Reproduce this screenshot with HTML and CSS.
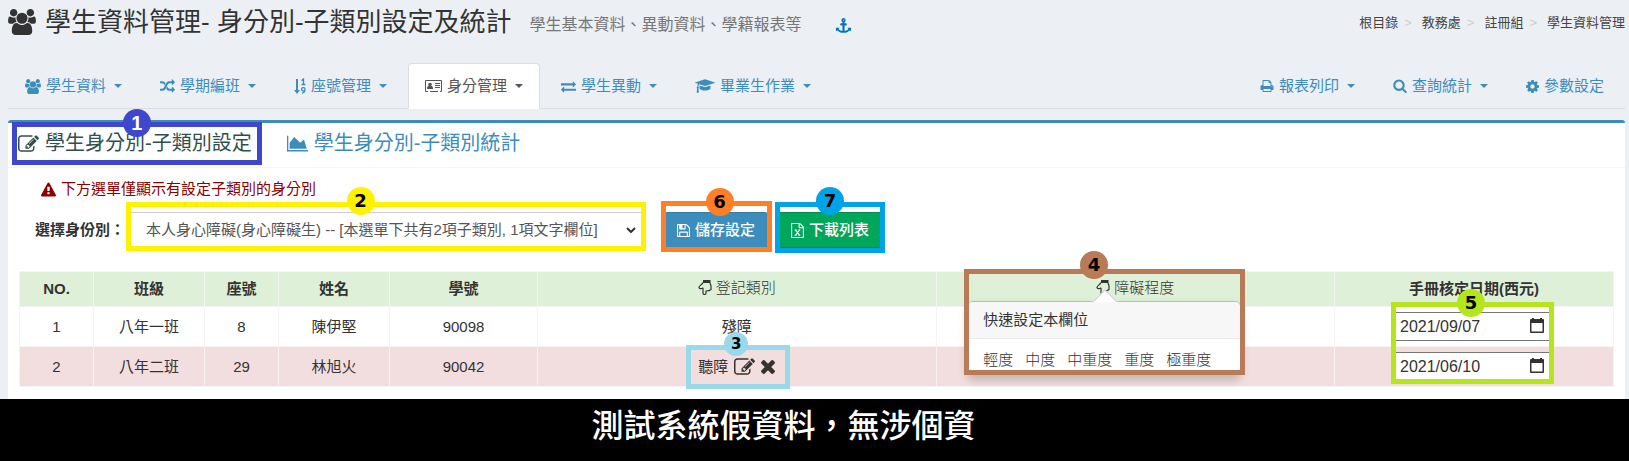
FILE: index.html
```html
<!DOCTYPE html>
<html lang="zh-Hant">
<head>
<meta charset="utf-8">
<meta name="viewport" content="width=device-width, initial-scale=1">
<title>學生資料管理</title>
<link rel="stylesheet" href="styles.css">
</head>
<body>
<svg class="sprite" aria-hidden="true">
  <symbol id="users" viewBox="0 0 1920 1792"><path d="M593 896q-162 5-265 128h-134q-82 0-138-40.5t-56-118.5q0-353 124-353 6 0 43.5 21t97.5 42.5 119 21.5q67 0 133-23-5 37-5 66 0 139 81 256zm1071 637q0 120-73 189.5t-194 69.5h-874q-121 0-194-69.5t-73-189.5q0-53 3.5-103.5t14-109 26.5-108.5 43-97.5 62-81 85.5-53.5 111.5-20q10 0 43 21.5t73 48 107 48 135 21.5 135-21.5 107-48 73-48 43-21.5q61 0 111.5 20t85.5 53.5 62 81 43 97.5 26.5 108.5 14 109 3.5 103.5zm-1024-1277q0 106-75 181t-181 75-181-75-75-181 75-181 181-75 181 75 75 181zm704 384q0 159-112.5 271.5t-271.5 112.5-271.5-112.5-112.5-271.5 112.5-271.5 271.5-112.5 271.5 112.5 112.5 271.5zm576 225q0 78-56 118.5t-138 40.5h-134q-103-123-265-128 81-117 81-256 0-29-5-66 66 23 133 23 59 0 119-21.5t97.5-42.5 43.5-21q124 0 124 353zm-128-609q0 106-75 181t-181 75-181-75-75-181 75-181 181-75 181 75 75 181z"/></symbol>
  <symbol id="random" viewBox="0 0 1792 1792"><path d="M666 481q-60 92-137 273-22-45-37-72.5t-40.5-63.5-51-56.5-63-35-81.5-14.5h-224q-14 0-23-9t-9-23v-192q0-14 9-23t23-9h224q250 0 410 225zm1126 799q0 14-9 23l-320 320q-9 9-23 9-13 0-22.5-9.5t-9.5-22.5v-192q-32 0-85 .5t-81 1-73-1-71-5-64-10.5-63-18.5-58-28.5-59-40-55-53.5-56-69.5q59-93 136-273 22 45 37 72.5t40.5 63.5 51 56.5 63 35 81.5 14.5h256v-192q0-14 9-23t23-9q12 0 24 10l319 319q9 9 9 23zm0-896q0 14-9 23l-320 320q-9 9-23 9-13 0-22.5-9.5t-9.5-22.5v-192h-256q-48 0-87 15t-69 45-51 61.5-45 77.5q-32 62-78 171-29 66-49.5 111t-54 105-64 100-74 83-90 68.5-106.5 42-128 16.5h-224q-14 0-23-9t-9-23v-192q0-14 9-23t23-9h224q48 0 87-15t69-45 51-61.5 45-77.5q32-62 78-171 29-66 49.5-111t54-105 64-100 74-83 90-68.5 106.5-42 128-16.5h256v-192q0-14 9-23t23-9q12 0 24 10l319 319q9 9 9 23z"/></symbol>
  <symbol id="idcard" viewBox="0 0 17 14"><path fill-rule="evenodd" d="M1 1h15q1 0 1 1v10q0 1-1 1h-1v-1h-2v1H5v-1H3v1H1q-1 0-1-1V2q0-1 1-1zm0 1v10h15V2z"/><circle cx="5" cy="5.500" r="1.800"/><path d="M2 10q0-3 1.500-3h3Q8 7 8 10zM10 4h5v1h-5zM10 6h5v1h-5zM10 8h5v1h-5z"/></symbol>
  <symbol id="exchange" viewBox="0 0 1792 1792"><path d="M1792 1184v192q0 13-9.500 22.500t-22.500 9.500h-1376v192q0 13-9.500 22.500t-22.500 9.500q-12 0-24-10l-319-320q-9-9-9-22 0-14 9-23l320-320q9-9 23-9 13 0 22.500 9.500t9.500 22.500v192h1376q13 0 22.500 9.500t9.500 22.500zm0-544q0 14-9 23l-320 320q-9 9-23 9-13 0-22.500-9.500t-9.500-22.500v-192h-1376q-13 0-22.500-9.500t-9.500-22.500v-192q0-13 9.500-22.500t22.500-9.500h1376v-192q0-14 9-23t23-9q12 0 24 10l319 319q9 9 9 23z"/></symbol>
  <symbol id="cap" viewBox="0 0 2304 1792"><path d="M1774 836l18 316q4 69-82 128t-235 93.500-323 34.500-323-34.500-235-93.500-82-128l18-316 574 181q22 7 48 7t48-7zm530-324q0 23-22 31l-1120 352q-4 1-10 1t-10-1l-652-206q-43 34-71 111.500t-34 178.500q63 36 63 109 0 69-58 107l58 433q2 14-8 25-9 11-24 11h-192q-15 0-24-11-10-11-8-25l58-433q-58-38-58-107 0-73 65-111 11-207 98-330l-333-104q-22-8-22-31t22-31l1120-352q4-1 10-1t10 1l1120 352q22 8 22 31z"/></symbol>
  <symbol id="print" viewBox="64 0 1664 1792"><path d="M448 1536h896v-256h-896v256zm0-640h896v-384h-160q-40 0-68-28t-28-68v-160h-640v640zm1152 64q0-26-19-45t-45-19-45 19-19 45 19 45 45 19 45-19 19-45zm128 0v416q0 13-9.500 22.500t-22.500 9.500h-224v160q0 40-28 68t-68 28h-960q-40 0-68-28t-28-68v-160h-224q-13 0-22.500-9.500t-9.500-22.500v-416q0-79 56.500-135.500t135.500-56.500h64v-544q0-40 28-68t68-28h672q40 0 88 20t76 48l152 152q28 28 48 76t20 88v256h64q79 0 135.500 56.500t56.500 135.500z"/></symbol>
  <symbol id="search" viewBox="64 64 1664 1728"><path d="M1216 832q0-185-131.500-316.500t-316.500-131.500-316.500 131.500-131.500 316.500 131.500 316.500 316.500 131.500 316.500-131.500 131.500-316.500zm512 832q0 52-38 90t-90 38q-54 0-90-38l-343-342q-179 124-399 124-143 0-273.500-55.500t-225-150-150-225-55.500-273.500 55.500-273.500 150-225 225-150 273.500-55.500 273.500 55.500 225 150 150 225 55.500 273.500q0 220-124 399l343 343q37 37 37 90z"/></symbol>
  <symbol id="cog" viewBox="128 128 1536 1536"><path d="M1152 896q0-106-75-181t-181-75-181 75-75 181 75 181 181 75 181-75 75-181zm512-109v222q0 12-8 23t-20 13l-185 28q-19 54-39 91 35 50 107 138 10 12 10 25t-9 23q-27 37-99 108t-94 71q-12 0-26-9l-138-108q-44 23-91 38-16 136-29 186-7 28-36 28h-222q-14 0-24.500-8.500t-11.500-21.500l-28-184q-49-16-90-37l-141 107q-10 9-25 9-14 0-25-11-126-114-165-168-7-10-7-23 0-12 8-23 15-21 51-66.500t54-70.500q-27-50-41-99l-183-27q-13-2-21-12.500t-8-23.500v-222q0-12 8-23t19-13l186-28q14-46 39-92-40-57-107-138-10-12-10-24 0-10 9-23 26-36 98.500-107.500t94.500-71.500q13 0 26 10l138 107q44-23 91-38 16-136 29-186 7-28 36-28h222q14 0 24.500 8.500t11.500 21.500l28 184q49 16 90 37l142-107q9-9 24-9 13 0 25 10 129 119 165 170 7 8 7 22 0 12-8 23-15 21-51 66.500t-54 70.500q26 50 41 98l183 28q13 2 21 12.500t8 23.500z"/></symbol>
  <symbol id="edit" viewBox="0 128 1792 1408"><path d="M888 1184l116-116-152-152-116 116v56h96v96h56zm440-720q-16-16-33 1l-350 350q-17 17-1 33t33-1l350-350q17-17 1-33zm80 594v190q0 119-84.500 203.500t-203.500 84.500h-832q-119 0-203.500-84.500t-84.500-203.500v-832q0-119 84.500-203.500t203.500-84.500h832q63 0 117 25 15 7 18 23 3 17-9 29l-49 49q-14 14-32 8-23-6-45-6h-832q-66 0-113 47t-47 113v832q0 66 47 113t113 47h832q66 0 113-47t47-113v-126q0-13 9-22l64-64q15-15 35-7t20 29zm-96-738l288 288-672 672h-288v-288zm444 132l-92 92-288-288 92-92q28-28 68-28t68 28l152 152q28 28 28 68t-28 68z"/></symbol>
  <symbol id="area" viewBox="0 128 2048 1536"><path d="M2048 1536v128h-2048v-1536h128v1408h1920zm-384-1024l256 896h-1664v-576l448-576 576 576z"/></symbol>
  <symbol id="warn" viewBox="0 0 1792 1664"><path d="M1024 1375v-190q0-14-9.500-23.500t-22.500-9.500h-192q-13 0-22.500 9.500t-9.500 23.500v190q0 14 9.500 23.500t22.500 9.500h192q13 0 22.500-9.500t9.500-23.500zm-2-374l18-459q0-12-10-19-13-11-24-11h-220q-11 0-24 11-10 7-10 21l17 457q0 10 10 16.500t24 6.500h185q14 0 23.500-6.500t10.500-16.500zm-14-934l768 1408q35 63-2 126-17 29-46.500 46t-63.500 17h-1536q-34 0-63.500-17t-46.500-46q-37-63-2-126l768-1408q17-31 47-49t65-18 65 18 47 49z"/></symbol>
  <symbol id="save" viewBox="128 128 1536 1536"><path d="M512 1536h768v-384h-768v384zm896 0h128v-896q0-14-10-38.500t-20-34.500l-281-281q-10-10-34-20t-39-10v416q0 40-28 68t-68 28h-576q-40 0-68-28t-28-68v-416h-128v1280h128v-416q0-40 28-68t68-28h832q40 0 68 28t28 68v416zm-384-928v-320q0-13-9.500-22.500t-22.500-9.500h-192q-13 0-22.500 9.500t-9.500 22.500v320q0 13 9.500 22.500t22.500 9.500h192q13 0 22.500-9.500t9.500-22.500zm640 32v928q0 40-28 68t-68 28h-1344q-40 0-68-28t-28-68v-1344q0-40 28-68t68-28h928q40 0 88 20t76 48l280 280q28 28 48 76t20 88z"/></symbol>
  <symbol id="excel" viewBox="128 0 1536 1792"><path d="M1596 380q28 28 48 76t20 88v1152q0 40-28 68t-68 28h-1344q-40 0-68-28t-28-68v-1600q0-40 28-68t68-28h896q40 0 88 20t76 48zm-444-244v376h376q-10-29-22-41l-313-313q-12-12-41-22zm384 1528v-1024h-416q-40 0-68-28t-28-68v-416h-768v1536h1280z"/><path fill="none" stroke="currentColor" stroke-width="130" d="M640 830l500 640M1150 830l-500 640M560 830h240M1000 830h230M560 1470h230M1000 1470h230"/></symbol>
  <symbol id="times" viewBox="302 366 1188 1188"><path d="M1490 1322q0 40-28 68l-136 136q-28 28-68 28t-68-28l-294-294-294 294q-28 28-68 28t-68-28l-136-136q-28-28-28-68t28-68l294-294-294-294q-28-28-28-68t28-68l136-136q28-28 68-28t68 28l294 294 294-294q28-28 68-28t68 28l136 136q28 28 28 68t-28 68l-294 294 294 294q28 28 28 68z"/></symbol>
  <symbol id="anchor" viewBox="0 0 1792 1792"><path d="M960 256q0-26-19-45t-45-19-45 19-19 45 19 45 45 19 45-19 19-45zm832 928v352q0 22-20 30-8 2-12 2-13 0-23-9l-93-93q-119 143-318.500 226.500t-429.500 83.500-429.500-83.500-318.500-226.500l-93 93q-9 9-23 9-4 0-12-2-20-8-20-30v-352q0-14 9-23t23-9h352q22 0 30 20 8 19-7 35l-100 100q67 91 189.500 153.500t271.500 82.500v-647h-192q-26 0-45-19t-19-45v-128q0-26 19-45t45-19h192v-163q-58-34-93-92.500t-35-128.500q0-106 75-181t181-75 181 75 75 181q0 70-35 128.500t-93 92.500v163h192q26 0 45 19t19 45v128q0 26-19 45t-45 19h-192v647q149-20 271.500-82.500t189.500-153.500l-100-100q-15-16-7-35 8-20 30-20h352q14 0 23 9t9 23z"/></symbol>
  <symbol id="hand" viewBox="0 0 14 15"><path fill="none" stroke="currentColor" stroke-width="1.200" stroke-linejoin="round" d="M5 2.500C4 5 1 5.500 1 7.500Q1.500 9.500 5 8v5q0 1.500 1.500 1.500T8 13v-2q3.500 0 5-1.500V6l-1-3"/><path d="M5 0h7.500v3H5z"/></symbol>
  <symbol id="calendar" viewBox="0 0 14 16"><path fill-rule="evenodd" d="M2 0h2v1h6V0h2v1h1q1 0 1 1v12q0 1-1 1H1q-1 0-1-1V2q0-1 1-1h1zm-.5 5v8.500h11V5z"/></symbol>
  <symbol id="chevron" viewBox="0 0 10 6"><path fill="none" stroke="currentColor" stroke-width="2" d="M1 1l4 4 4-4"/></symbol>
</svg>

<main class="page">
  <header class="top">
    <h1 class="title"><svg class="ico i-title"><use href="#users"/></svg>學生資料管理- 身分別-子類別設定及統計</h1>
    <small class="subtitle">學生基本資料、異動資料、學籍報表等</small>
    <a class="anchor" href="#top" aria-label="錨點"><svg class="ico i15"><use href="#anchor"/></svg></a>
    <ol class="crumbs">
      <li><a href="#root">根目錄</a></li>
      <li><a href="#academic">教務處</a></li>
      <li><a href="#registry">註冊組</a></li>
      <li><a href="#students">學生資料管理</a></li>
    </ol>
  </header>

  <nav class="nav">
    <a class="nav-item" href="#data"><svg class="ico i16"><use href="#users"/></svg>學生資料<i class="caret"></i></a>
    <a class="nav-item" href="#class"><svg class="ico i15"><use href="#random"/></svg>學期編班<i class="caret"></i></a>
    <a class="nav-item" href="#seat"><svg class="ico i-sort" viewBox="0 0 12 16"><path d="M2 1h2v11h2l-3 4-3-4h2z"/><path fill="none" stroke="currentColor" stroke-width="1.300" d="M7.500 2.500L9.500 1v5.500M7.500 6.500h4M11 11.500a1.700 1.700 0 1 1 0-.5c0 2.500-.5 4-3 4"/></svg>座號管理<i class="caret"></i></a>
    <a class="nav-item active" href="#identity"><svg class="ico i17"><use href="#idcard"/></svg>身分管理<i class="caret"></i></a>
    <a class="nav-item" href="#transfer"><svg class="ico i15"><use href="#exchange"/></svg>學生異動<i class="caret"></i></a>
    <a class="nav-item" href="#graduate"><svg class="ico i-cap"><use href="#cap"/></svg>畢業生作業<i class="caret"></i></a>
    <span class="spacer"></span>
    <a class="nav-item" href="#report"><svg class="ico i14"><use href="#print"/></svg>報表列印<i class="caret"></i></a>
    <a class="nav-item" href="#query"><svg class="ico i14"><use href="#search"/></svg>查詢統計<i class="caret"></i></a>
    <a class="nav-item" href="#params"><svg class="ico i13"><use href="#cog"/></svg>參數設定</a>
  </nav>

  <section class="box">
    <div class="tabs">
      <a class="tab current" href="#setting"><svg class="ico i-tab"><use href="#edit"/></svg>學生身分別-子類別設定<span class="mark m1"><b class="badge">1</b></span></a>
      <a class="tab" href="#stats"><svg class="ico i-tab"><use href="#area"/></svg>學生身分別-子類別統計</a>
    </div>

    <div class="body">
      <p class="warning"><svg class="ico i15"><use href="#warn"/></svg>下方選單僅顯示有設定子類別的身分別</p>

      <form class="filter">
        <label class="filter-label" for="kind">選擇身份別：</label>
        <div class="select-wrap">
          <select class="select" id="kind"><option>本人身心障礙(身心障礙生) -- [本選單下共有2項子類別, 1項文字欄位]</option></select>
          <svg class="ico chevron"><use href="#chevron"/></svg>
          <span class="mark m2"><b class="badge">2</b></span>
        </div>
        <div class="btn-wrap">
          <button class="btn blue" type="button"><svg class="ico i13"><use href="#save"/></svg>儲存設定</button>
          <span class="mark m6"><b class="badge">6</b></span>
        </div>
        <div class="btn-wrap">
          <button class="btn green" type="button"><svg class="ico i-excel"><use href="#excel"/></svg>下載列表</button>
          <span class="mark m7"><b class="badge">7</b></span>
        </div>
      </form>

      <table class="grid">
        <colgroup><col class="c-no"><col class="c-class"><col class="c-no"><col class="c-class"><col class="c-id"><col class="c-type"><col class="c-type"><col></colgroup>
        <thead>
          <tr>
            <th>NO.</th><th>班級</th><th>座號</th><th>姓名</th><th>學號</th>
            <th class="light"><button class="col-btn" type="button"><svg class="ico i-hand"><use href="#hand"/></svg>登記類別</button></th>
            <th class="light">
              <div class="pop-anchor">
                <button class="col-btn" type="button"><svg class="ico i-hand"><use href="#hand"/></svg>障礙程度</button>
                <div class="popover">
                  <div class="pop-title">快速設定本欄位</div>
                  <div class="pop-body"><a href="#l1">輕度</a><a href="#l2">中度</a><a href="#l3">中重度</a><a href="#l4">重度</a><a href="#l5">極重度</a></div>
                </div>
                <span class="mark m4"><b class="badge">4</b></span>
              </div>
            </th>
            <th>手冊核定日期(西元)</th>
          </tr>
        </thead>
        <tbody>
          <tr>
            <td>1</td><td>八年一班</td><td>8</td><td>陳伊堅</td><td>90098</td><td>殘障</td><td></td>
            <td><div class="date"><input class="date-input" type="text" value="2021/09/07" aria-label="陳伊堅 手冊核定日期"><button class="date-btn" type="button" aria-label="選擇日期"><svg class="ico i-cal"><use href="#calendar"/></svg></button><span class="mark m5"><b class="badge">5</b></span></div></td>
          </tr>
          <tr class="alert">
            <td>2</td><td>八年二班</td><td>29</td><td>林旭火</td><td>90042</td>
            <td><div class="entry">聽障<button class="icon-btn" type="button" aria-label="編輯"><svg class="ico i-edit"><use href="#edit"/></svg></button><button class="icon-btn" type="button" aria-label="刪除"><svg class="ico i14"><use href="#times"/></svg></button><span class="mark m3"><b class="badge">3</b></span></div></td>
            <td></td>
            <td><div class="date"><input class="date-input" type="text" value="2021/06/10" aria-label="林旭火 手冊核定日期"><button class="date-btn" type="button" aria-label="選擇日期"><svg class="ico i-cal"><use href="#calendar"/></svg></button></div></td>
          </tr>
        </tbody>
      </table>
    </div>
  </section>
</main>
<footer class="caption">測試系統假資料，無涉個資</footer>
</body>
</html>
```
FILE: styles.css
```css
* { box-sizing: border-box; }

body {
  margin: 0;
  min-height: 100vh;
  display: flex;
  flex-direction: column;
  background: #ecf0f5;
  color: #333;
  font: 15px/20px "Liberation Sans", "Noto Sans CJK TC", sans-serif;
}

a { color: inherit; text-decoration: none; }
button, input, select { font: inherit; color: inherit; }

.sprite { position: absolute; width: 0; height: 0; }
.ico { display: block; flex: none; width: 15px; height: 15px; fill: currentColor; }
.i13 { width: 13px; height: 13px; }
.i14 { width: 14px; height: 14px; }
.i16 { width: 16px; }
.i17 { width: 17px; height: 14px; }
.i-title { width: 28px; height: 26px; }
.i-sort { width: 12px; height: 16px; }
.i-cap { width: 20px; height: 16px; }
.i-tab { width: 21px; height: 17px; }
.i-excel { width: 13px; height: 15px; }
.i-hand { width: 14px; height: 15px; }
.i-cal { width: 14px; height: 16px; }
.i-edit { width: 21px; height: 17px; }

.page { padding: 0 4px 0 8px; }

.top { display: flex; align-items: center; height: 63px; padding-bottom: 19px; }
.title { display: flex; align-items: center; gap: 9px; margin: 0; font-size: 26px; font-weight: 400; line-height: 36px; }
.subtitle { margin: 6px 0 0 18px; font-size: 16px; color: #777; }
.anchor { margin: 6px 0 0 34px; color: #0073b7; }
.crumbs { display: flex; margin: 2px 0 0 auto; padding: 0; list-style: none; font-size: 13px; color: #444; }
.crumbs li + li::before { content: ">"; padding: 0 10px 0 6px; color: #ccc; }

.nav { display: flex; border-bottom: 1px solid #ddd; color: #3c8dbc; }
.nav-item {
  display: flex;
  align-items: center;
  gap: 5px;
  margin: 0 4px -1px 0;
  padding: 12px 16px;
  border: 1px solid transparent;
  border-radius: 4px 4px 0 0;
}
.nav-item.active { background: #fff; border-color: #ddd; border-bottom-color: #fff; color: #555; }
.caret { margin-left: 3px; border: 4px solid transparent; border-top-color: currentColor; border-bottom: 0; }
.spacer { flex: 1; }

.box { margin-top: 11px; background: #fff; border-top: 3px solid #3c8dbc; border-radius: 3px 3px 0 0; }
.tabs { display: flex; gap: 35px; padding: 0 10px; border-bottom: 1px solid #f4f4f4; }
.tab { position: relative; display: flex; align-items: center; gap: 6px; padding: 5px 0 9px; font-size: 20px; line-height: 30px; color: #3c8dbc; }
.tab.current { color: #2f4f4f; }

.body { padding: 11px 11px 12px; }
.warning { display: flex; align-items: center; gap: 5px; margin: 0 0 13px 22px; color: #8b0000; }
.filter { display: flex; align-items: center; gap: 10px; margin: 0 0 23px 16px; }
.filter-label { font-weight: 700; }
.select-wrap { position: relative; margin-right: 11px; margin-left: -6px; }
.select {
  display: block;
  width: 514px;
  height: 36px;
  padding: 0 28px 0 16px;
  border: 1px solid #ccd;
  border-radius: 0;
  background: #fff;
  color: #555;
  appearance: none;
}
.chevron { position: absolute; right: 7px; top: 15px; width: 10px; height: 6px; color: #333; }

.btn-wrap { position: relative; }
.btn {
  display: flex;
  align-items: center;
  gap: 5px;
  height: 36px;
  padding: 0 12px;
  border: 1px solid;
  border-radius: 3px;
  color: #fff;
  font-weight: 500;
}
.blue { background: #3c8dbc; border-color: #367fa9; }
.green { background: #00a65a; border-color: #008d4c; }

.grid { width: 100%; border-collapse: collapse; table-layout: fixed; text-align: center; }
.grid th, .grid td { border: 1px solid #f4f4f4; padding: 4px; }
.grid th { height: 35px; background: #dff0d8; font-weight: 700; }
.grid td { height: 40px; }
.grid .light { font-weight: 300; }
.grid .alert td { background: #f2dede; }
.c-no { width: 74px; }
.c-class { width: 111px; }
.c-id { width: 148px; }
.c-type { width: 25%; }

.col-btn, .icon-btn, .date-btn { padding: 0; border: 0; background: none; }
.col-btn { display: inline-flex; align-items: center; gap: 4px; }
.entry { position: relative; display: inline-flex; align-items: center; gap: 6px; }

.date { position: relative; display: inline-flex; vertical-align: middle; }
.date-input { width: 158px; height: 29px; padding: 0 28px 0 4px; border: 1px solid #767676; background: #fff; font-size: 16px; }
.date-btn { position: absolute; right: 9px; top: 6px; }

.pop-anchor { position: relative; display: inline-flex; }
.popover {
  position: absolute;
  z-index: 1;
  top: 23px;
  left: 8px;
  width: 274px;
  transform: translateX(-50%);
  border: 1px solid #bbb;
  border-radius: 6px;
  background: #fff;
  box-shadow: 0 5px 10px rgba(0, 0, 0, .2);
  text-align: left;
}
.popover::before {
  content: "";
  position: absolute;
  top: -9px;
  left: 50%;
  width: 16px;
  height: 16px;
  margin-left: -8px;
  transform: rotate(45deg);
  background: #fff;
  border: 1px solid #ccc;
}
.pop-title { position: relative; padding: 8px 15px; border-bottom: 1px solid #ebebeb; border-radius: 5px 5px 0 0; background: #f7f7f7; font-weight: 400; }
.pop-body { display: flex; gap: 12px; padding: 11px 15px 4px; }

.mark { position: absolute; z-index: 2; border: 5px solid var(--c); pointer-events: none; }
.badge {
  position: absolute;
  top: -18px;
  left: 50%;
  width: 28px;
  height: 28px;
  margin-left: -14px;
  border-radius: 50%;
  background: var(--c);
  color: #000;
  font: 700 18px/28px "DejaVu Sans", sans-serif;
  text-align: center;
}
.m1 { --c: #3f48cc; inset: -1px -10px 2px -6px; }
.m1 .badge { color: #fff; font-family: "Liberation Sans", sans-serif; font-size: 20px; }
.m2 { --c: #fff200; inset: -10px -3px -3px; }
.m2 .badge { left: 45%; top: -20px; }
.m3 { --c: #99d9ea; inset: -12px -15px -12px -12px; }
.m3 .badge { width: 24px; height: 24px; margin-left: -14px; font-size: 15px; line-height: 24px; top: -18px; }
.m4 { --c: #b97a57; top: -9px; left: -132px; width: 281px; height: 106px; }
.m4 .badge { left: 46%; top: -23px; }
.m5 { --c: #b5e61d; inset: -10px -1px -43px -4px; }
.m5 .badge { left: 49%; }
.m6 { --c: #ff7f27; inset: -11px -4px -4px -3px; }
.m6 .badge { left: 53%; }
.m7 { --c: #00a2e8; inset: -10px -3px -5px; }
.m7 .badge { top: -20px; }

.caption {
  flex: 1;
  padding: 7px 62px 0 0;
  background: #000;
  color: #fff;
  font-size: 32px;
  font-weight: 500;
  line-height: 40px;
  text-align: center;
}
```
